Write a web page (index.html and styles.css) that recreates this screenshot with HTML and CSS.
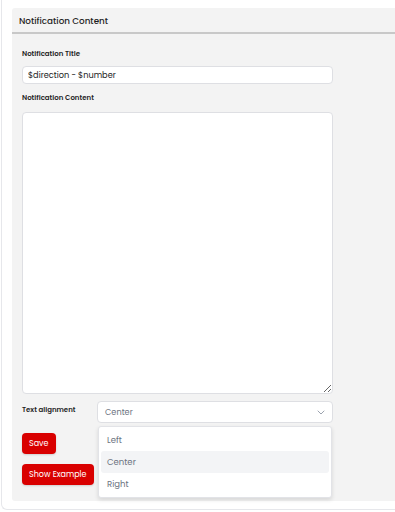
FILE: index.html
```html
<!doctype html>
<html>
  <head>
    <meta charset="utf8">
    <meta name="viewport" content="width=device-width,initial-scale=1"/>
    <title>Notification Content</title>
    <link rel="stylesheet" href="styles.css">
  </head>
  <body>
    <div class="card">
      <section class="panel">
        <header class="panel-head">Notification Content</header>
        <div class="panel-body">
          <label class="label first">Notification Title</label>
          <input class="field" type="text" value="$direction - $number">
          <label class="label">Notification Content</label>
          <textarea class="area"></textarea>
          <div class="row">
            <label class="label inline">Text alignment</label>
            <div class="select-wrap">
              <div class="select">
                <span>Center</span>
                <svg width="8" height="5" viewBox="0 0 8 5"><path d="M1 1l3 3 3-3" fill="none" stroke="#9ca3af" stroke-width="1" stroke-linecap="round" stroke-linejoin="round"/></svg>
              </div>
              <ul class="menu">
                <li>Left</li>
                <li class="active">Center</li>
                <li>Right</li>
              </ul>
            </div>
          </div>
          <div class="actions">
            <button class="btn">Save</button>
            <button class="btn">Show Example</button>
          </div>
        </div>
      </section>
    </div>
  </body>
</html>
```

FILE: styles.css
```css
html, body { margin: 0; padding: 0; background: #fff; overflow: hidden; font-family: Poppins, Inter, "Noto Sans", sans-serif; color: #1f1f1f; }
.card { margin-left: 1px; width: 383px; border: 1px solid #e6e7eb; border-top: none; border-right: none; border-radius: 0 0 0 6px; padding: 8px 0 8px 10px; }
.panel { background: #f3f3f3; border-radius: 3px 0 0 3px; }
.panel-head { height: 24px; line-height: 26px; padding: 0 7px; font-size: 8.8px; font-weight: 500; border-bottom: 2px solid #c8c8c8; }
.panel-body { padding: 15px 10px 16px; width: 311px; }
.label { display: block; font-size: 7px; font-weight: 600; line-height: 10px; margin-bottom: 10px; }
.label.first { margin-bottom: 7px; }
.field { display: block; box-sizing: border-box; width: 311px; height: 18px; margin: 0 0 9px; padding: 0 5px; border: 1px solid #dedfe3; border-radius: 4px; background: #fff; font: inherit; font-size: 8.2px; color: #222; outline: none; }
.area { display: block; box-sizing: border-box; width: 311px; height: 282px; margin: -1px 0 7px; border: 1px solid #dedfe3; border-radius: 4px; background: #fff; resize: vertical; }
.row { display: flex; }
.label.inline { width: 75px; margin: 4px 0 0; flex: none; }
.select-wrap { position: relative; flex: 1; }
.select { box-sizing: border-box; height: 22px; display: flex; align-items: center; justify-content: space-between; padding: 0 7px 0 7px; border: 1px solid #dedfe3; border-radius: 4px; background: #fff; font-size: 8.2px; color: #6b7280; }
.menu { position: absolute; top: 25px; left: 1px; right: 1px; height: 72px; box-sizing: border-box; margin: 0; padding: 2px 2px; list-style: none; background: #fff; border: 1px solid #e2e3e7; border-radius: 3px; box-shadow: 0 2px 4px rgba(0,0,0,0.12); }
.menu li { height: 22px; line-height: 22px; padding: 0 6px; font-size: 8.5px; color: #6b7280; border-radius: 3px; }
.menu li.active { background: #f3f4f6; }
.actions { display: flex; flex-direction: column; align-items: flex-start; gap: 10px; margin-top: 10px; }
.btn { height: 21px; padding: 0 7px; border: none; border-radius: 4px; background: #d90000; color: #fff; font: inherit; font-size: 8px; box-shadow: 0 1px 2px rgba(0,0,0,0.15); }
```
